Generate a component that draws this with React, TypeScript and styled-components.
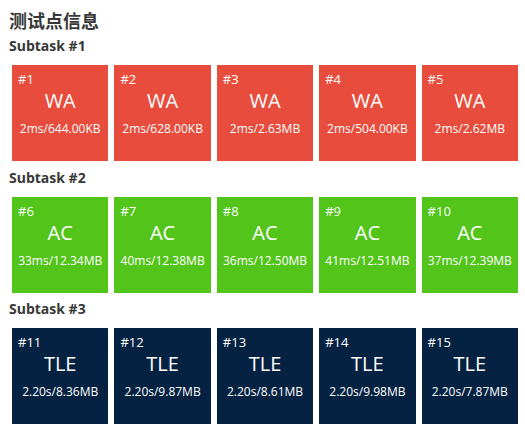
import React from "react";
import styled, { createGlobalStyle } from "styled-components";

const Global = createGlobalStyle`
  html, body { margin: 0; padding: 0; background: #fff; }
  body { font-family: "Open Sans", "Noto Sans CJK SC", sans-serif; }
`;

const Page = styled.div`
  padding: 8px 4px 0 9px;
  width: 512px;
`;

const Title = styled.h3`
  margin: 0 0 4px;
  font-size: 18px;
  line-height: 24px;
  font-weight: 700;
  color: #383838;
  font-family: "Noto Sans CJK SC", sans-serif;
`;

const SubTitle = styled.h4`
  margin: 0;
  font-size: 14px;
  line-height: 20px;
  font-weight: 700;
  color: #383838;
`;

const Grid = styled.div`
  display: grid;
  grid-template-columns: repeat(5, 1fr);
  margin-top: 6px;
`;

type Status = "WA" | "AC" | "TLE";

const colors: Record<Status, string> = {
  WA: "#e74c3c",
  AC: "#52c41a",
  TLE: "#052242",
};

const Cell = styled.div`
  padding: 3px;
`;

const Box = styled.div<{ $status: Status }>`
  background: ${(p) => colors[p.$status]};
  color: #fff;
  height: 96px;
  padding: 6px;
  box-sizing: border-box;
  display: flex;
  flex-direction: column;
`;

const Id = styled.div`
  font-size: 13px;
  line-height: 16px;
`;

const Verdict = styled.div`
  text-align: center;
  font-size: 20px;
  line-height: 26px;
  margin-top: 1px;
`;

const Info = styled.div`
  text-align: center;
  font-size: 12px;
  line-height: 18px;
  margin-top: 6px;
`;

const Section = styled.section`
  & + & { margin-top: 3.5px; }
`;

const data: { name: string; status: Status; cases: [number, string][] }[] = [
  {
    name: "Subtask #1",
    status: "WA",
    cases: [
      [1, "2ms/644.00KB"],
      [2, "2ms/628.00KB"],
      [3, "2ms/2.63MB"],
      [4, "2ms/504.00KB"],
      [5, "2ms/2.62MB"],
    ],
  },
  {
    name: "Subtask #2",
    status: "AC",
    cases: [
      [6, "33ms/12.34MB"],
      [7, "40ms/12.38MB"],
      [8, "36ms/12.50MB"],
      [9, "41ms/12.51MB"],
      [10, "37ms/12.39MB"],
    ],
  },
  {
    name: "Subtask #3",
    status: "TLE",
    cases: [
      [11, "2.20s/8.36MB"],
      [12, "2.20s/9.87MB"],
      [13, "2.20s/8.61MB"],
      [14, "2.20s/9.98MB"],
      [15, "2.20s/7.87MB"],
    ],
  },
];

export default function App() {
  return (
    <>
      <Global />
      <Page>
        <Title>测试点信息</Title>
        {data.map((s) => (
          <Section key={s.name}>
            <SubTitle>{s.name}</SubTitle>
            <Grid>
              {s.cases.map(([id, info]) => (
                <Cell key={id}>
                  <Box $status={s.status}>
                    <Id>#{id}</Id>
                    <Verdict>{s.status}</Verdict>
                    <Info>{info}</Info>
                  </Box>
                </Cell>
              ))}
            </Grid>
          </Section>
        ))}
      </Page>
    </>
  );
}
